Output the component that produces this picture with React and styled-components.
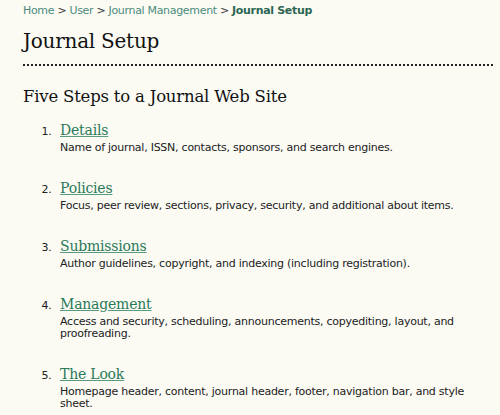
import styled, { createGlobalStyle } from "styled-components";

const GlobalStyle = createGlobalStyle`
  html, body {
    margin: 0;
    padding: 0;
    background: #fbfbf4;
  }
`;

const steps = [
  {
    title: "Details",
    description: "Name of journal, ISSN, contacts, sponsors, and search engines.",
  },
  {
    title: "Policies",
    description:
      "Focus, peer review, sections, privacy, security, and additional about items.",
  },
  {
    title: "Submissions",
    description:
      "Author guidelines, copyright, and indexing (including registration).",
  },
  {
    title: "Management",
    description:
      "Access and security, scheduling, announcements, copyediting, layout, and proofreading.",
  },
  {
    title: "The Look",
    description:
      "Homepage header, content, journal header, footer, navigation bar, and style sheet.",
  },
];

const App = () => {
  return (
    <>
      <GlobalStyle />
      <StyledPage>
        <Breadcrumb>
          <a href="#home">Home</a> &gt; <a href="#user">User</a> &gt;{" "}
          <a href="#manager">Journal Management</a> &gt;{" "}
          <a href="#setup" className="current">
            Journal Setup
          </a>
        </Breadcrumb>
        <PageTitle>Journal Setup</PageTitle>
        <SectionTitle>Five Steps to a Journal Web Site</SectionTitle>
        <StepList>
          {steps.map((step, i) => (
            <Step key={step.title}>
              <StepLink href={`#step${i + 1}`}>{step.title}</StepLink>
              <StepText>{step.description}</StepText>
            </Step>
          ))}
        </StepList>
      </StyledPage>
    </>
  );
};

const StyledPage = styled.div`
  width: 470px;
  padding: 4px 0 0 23px;
  color: #222;
  font-family: "DejaVu Sans", Verdana, sans-serif;
  font-size: 11px;
  letter-spacing: -0.25px;
`;

const Breadcrumb = styled.div`
  line-height: 14px;
  letter-spacing: -0.32px;
  color: #333;
  a {
    color: #4b8b7d;
    text-decoration: none;
  }
  .current {
    color: #2c6653;
    font-weight: bold;
  }
`;

const PageTitle = styled.h2`
  margin: 9px 0 0;
  padding-bottom: 9px;
  border-bottom: 2px dotted #222;
  font-family: "DejaVu Serif", Georgia, serif;
  font-weight: normal;
  font-size: 20px;
  letter-spacing: -0.25px;
  line-height: 28px;
  color: #111;
`;

const SectionTitle = styled.h3`
  margin: 19px 0 0;
  font-family: "DejaVu Serif", Georgia, serif;
  font-weight: normal;
  font-size: 16.5px;
  letter-spacing: -0.2px;
  line-height: 24px;
  color: #111;
`;

const StepList = styled.ol`
  margin: 11px 0 0;
  padding-left: 37px;
`;

const Step = styled.li`
  margin-bottom: 24px;
  &::marker {
    content: counter(list-item) ".\\2002\\00a0";
    font-family: "DejaVu Sans", Verdana, sans-serif;
    font-size: 11px;
    color: #222;
  }
`;

const StepLink = styled.a`
  display: inline-block;
  font-family: "DejaVu Serif", Georgia, serif;
  font-size: 14px;
  letter-spacing: -0.2px;
  line-height: 20px;
  color: #2a7a5a;
  text-decoration: underline;
  text-decoration-color: #5a9a80;
`;

const StepText = styled.div`
  margin-top: 2px;
  line-height: 12px;
`;

export default App;
